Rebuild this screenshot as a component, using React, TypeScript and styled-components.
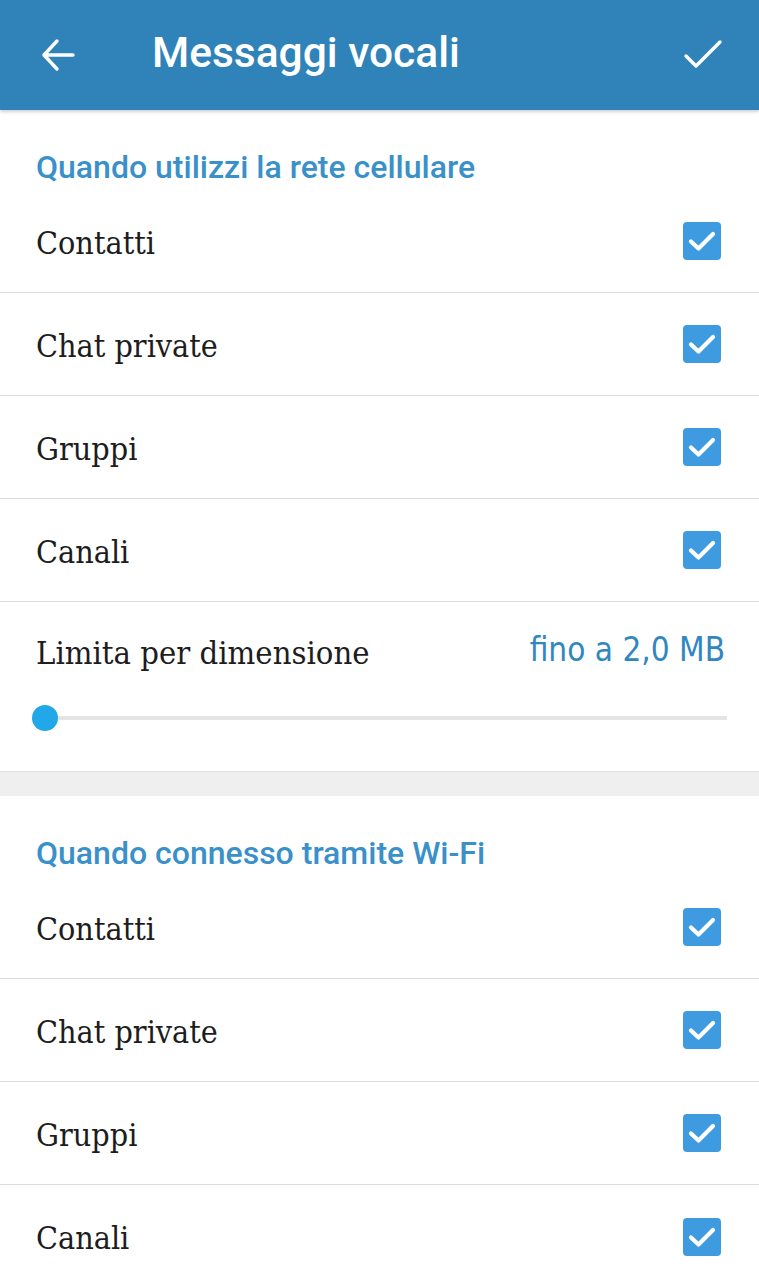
import React from "react";
import styled, { createGlobalStyle } from "styled-components";

const Global = createGlobalStyle`
  html, body { margin: 0; padding: 0; background: #ffffff; }
  body { width: 759px; overflow: hidden; }
`;

const Page = styled.div`
  width: 759px;
  min-height: 1280px;
  background: #ffffff;
  display: flex;
  flex-direction: column;
`;

const Toolbar = styled.header`
  height: 110px;
  background: #2f83b9;
  display: flex;
  align-items: center;
  padding: 0 36px 0 38px;
  box-shadow: 0 2px 3px rgba(0,0,0,0.18);
  position: relative;
  z-index: 1;
`;

const IconButton = styled.div`
  width: 40px;
  height: 40px;
  display: flex;
  align-items: center;
  justify-content: center;
`;

const Title = styled.h1`
  flex: 1;
  margin: 0 0 6px 74px;
  font-family: Roboto, "Noto Sans", sans-serif;
  font-weight: 500;
  font-size: 42.5px;
  color: #ffffff;
  letter-spacing: 0;
`;

const Section = styled.section`
  background: #ffffff;
  display: flex;
  flex-direction: column;
`;

const SectionTitle = styled.div`
  height: 82px;
  box-sizing: border-box;
  padding: 41px 36px 0;
  font-family: Roboto, "Noto Sans", sans-serif;
  font-weight: 500;
  font-size: 32px;
  color: #3a90c9;
  line-height: 1;
`;

const Row = styled.div<{ $divider?: boolean }>`
  height: 103px;
  box-sizing: border-box;
  display: flex;
  align-items: center;
  justify-content: space-between;
  padding: 0 38px 0 36px;
  border-bottom: ${(p) => (p.$divider ? "1px solid #dcdcdc" : "none")};
`;

const FirstRow = styled(Row)`
  height: 101px;
  padding-bottom: 2px;
`;

const Label = styled.span`
  font-family: "DejaVu Serif Condensed", "DejaVu Serif", serif;
  font-size: 32px;
  color: #1d1d1d;
  margin-top: 3px;
`;

const Check = styled.div`
  width: 38px;
  height: 38px;
  border-radius: 4px;
  background: #3e9be0;
  display: flex;
  align-items: center;
  justify-content: center;
`;

const LimitBlock = styled.div`
  height: 169px;
  box-sizing: border-box;
  padding: 28px 34px 0 36px;
  display: flex;
  flex-direction: column;
`;

const LimitHeader = styled.div`
  display: flex;
  justify-content: space-between;
  align-items: flex-start;
`;

const LimitLabel = styled(Label)`
  margin-top: 4px;
  font-size: 32.5px;
`;

const LimitValue = styled.span`
  font-family: "DejaVu Sans Condensed", "Liberation Sans Narrow", sans-serif;
  font-size: 33px;
  color: #3187c0;
`;

const Slider = styled.div`
  margin-top: 32px;
  height: 28px;
  position: relative;
  display: flex;
  align-items: center;
`;

const Track = styled.div`
  flex: 1;
  margin: 0 -2px 0 9px;
  height: 4px;
  background: #e4e4e4;
`;

const Thumb = styled.div`
  position: absolute;
  left: -4px;
  top: 1px;
  width: 26px;
  height: 26px;
  border-radius: 50%;
  background: #20a8e8;
`;

const Gap = styled.div`
  height: 24px;
  background: #efefef;
  border-top: 1px solid #e2e2e2;
`;

const CheckIcon = () => (
  <svg width="28" height="22" viewBox="0 0 28 22">
    <path d="M3 11.5 L10.5 18.5 L25 4" fill="none" stroke="#fff" strokeWidth="4.2" strokeLinecap="round" strokeLinejoin="round" />
  </svg>
);

const rows = ["Contatti", "Chat private", "Gruppi", "Canali"];

const Checkbox = () => (
  <Check>
    <CheckIcon />
  </Check>
);

export default function App() {
  return (
    <Page>
      <Global />
      <Toolbar>
        <IconButton>
          <svg width="36" height="36" viewBox="0 0 36 36">
            <path d="M33 18 H5 M17 4 L4 18 L17 32" fill="none" stroke="#fff" strokeWidth="3.4" strokeLinecap="round" strokeLinejoin="round" />
          </svg>
        </IconButton>
        <Title>Messaggi vocali</Title>
        <IconButton>
          <svg width="40" height="32" viewBox="0 0 40 32">
            <path d="M3 17 L13 27 L37 3" fill="none" stroke="#fff" strokeWidth="3.4" strokeLinecap="round" strokeLinejoin="round" />
          </svg>
        </IconButton>
      </Toolbar>
      <Section>
        <SectionTitle>Quando utilizzi la rete cellulare</SectionTitle>
        {rows.map((r, i) =>
          i === 0 ? (
            <FirstRow key={r} $divider>
              <Label>{r}</Label>
              <Checkbox />
            </FirstRow>
          ) : (
            <Row key={r} $divider>
              <Label>{r}</Label>
              <Checkbox />
            </Row>
          )
        )}
        <LimitBlock>
          <LimitHeader>
            <LimitLabel>Limita per dimensione</LimitLabel>
            <LimitValue>fino a 2,0 MB</LimitValue>
          </LimitHeader>
          <Slider>
            <Thumb />
            <Track />
          </Slider>
        </LimitBlock>
      </Section>
      <Gap />
      <Section>
        <SectionTitle>Quando connesso tramite Wi-Fi</SectionTitle>
        {rows.map((r, i) =>
          i === 0 ? (
            <FirstRow key={r} $divider>
              <Label>{r}</Label>
              <Checkbox />
            </FirstRow>
          ) : (
            <Row key={r} $divider={i < rows.length - 1}>
              <Label>{r}</Label>
              <Checkbox />
            </Row>
          )
        )}
      </Section>
    </Page>
  );
}
